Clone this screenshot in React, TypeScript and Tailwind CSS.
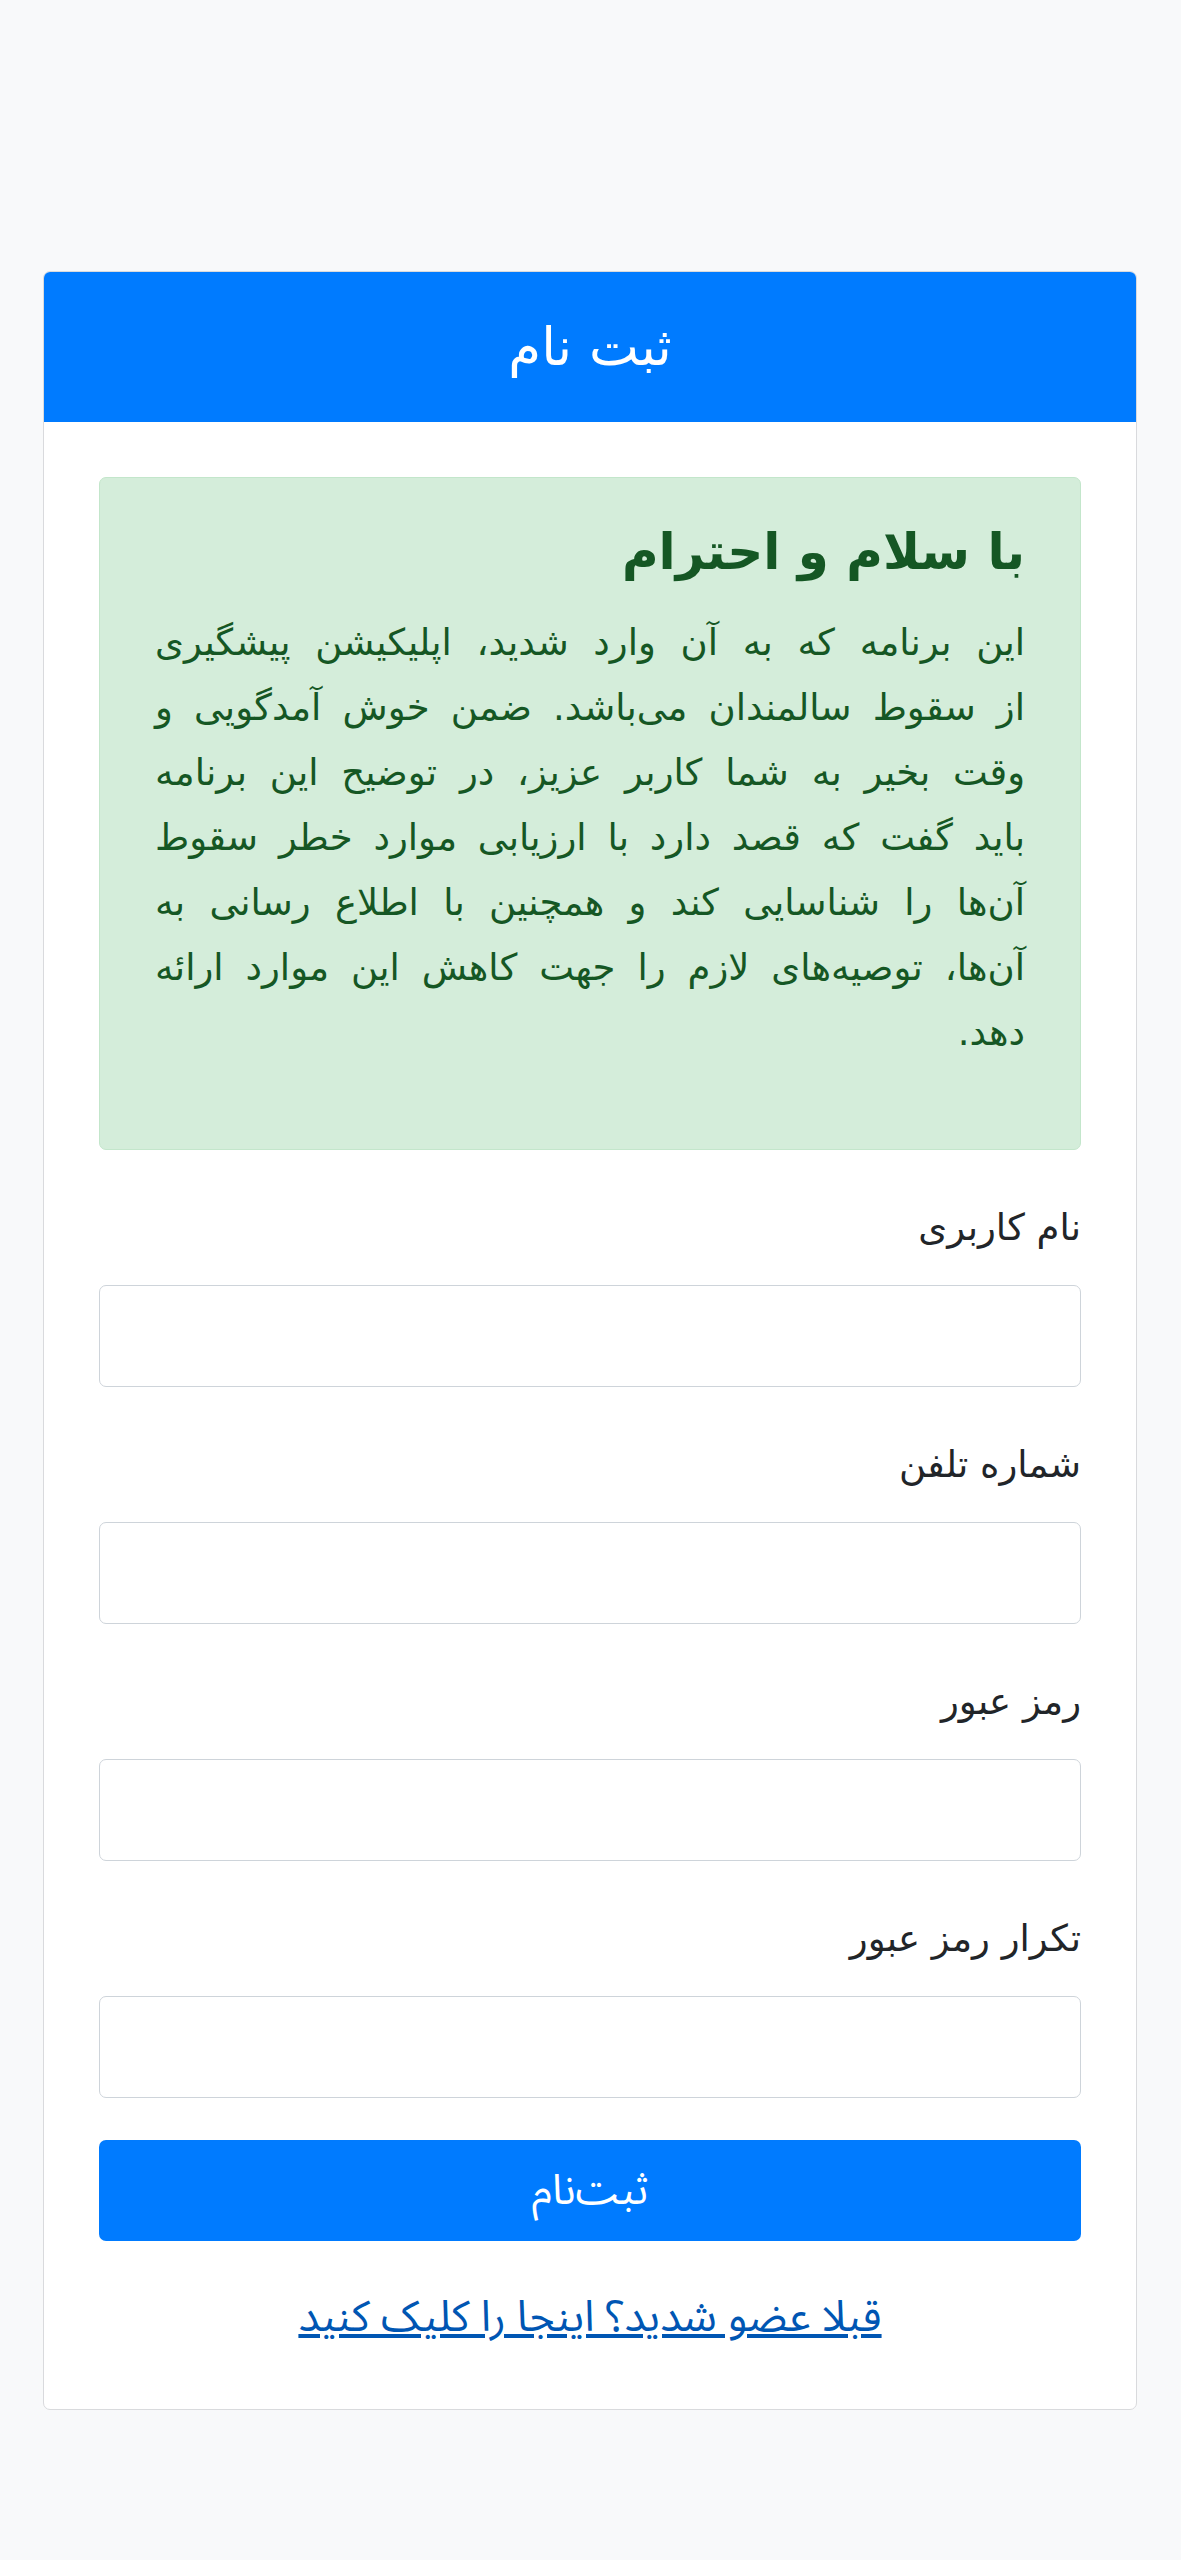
import React from "react";

// Persian text is drawn with DejaVu Sans; button and link use a second stack
const mainFont = "font-['DejaVu_Sans',sans-serif]";
const altFont = "font-['Noto_Sans_Arabic','Noto_Sans','DejaVu_Sans',sans-serif]";

const fields = [
  { id: "username", label: "نام کاربری", type: "text" },
  { id: "phone", label: "شماره تلفن", type: "tel" },
  { id: "password", label: "رمز عبور", type: "password" },
  { id: "password2", label: "تکرار رمز عبور", type: "password" },
];

// lines of the welcome note, broken where the original breaks them
const introLines = [
  "این برنامه که به آن وارد شدید، اپلیکیشن پیشگیری",
  "از سقوط سالمندان می‌باشد. ضمن خوش آمدگویی و",
  "وقت بخیر به شما کاربر عزیز، در توضیح این برنامه",
  "باید گفت که قصد دارد با ارزیابی موارد خطر سقوط",
  "آن‌ها را شناسایی کند و همچنین با اطلاع رسانی به",
  "آن‌ها، توصیه‌های لازم را جهت کاهش این موارد ارائه",
];

const App = () => {
  return (
    <div dir="rtl" className={`min-h-[2560px] bg-[#f8f9fa] px-[44px] pt-[271px] ${mainFont}`}>
      <div className="w-[1094px] rounded-[7px] border border-[#d9dadd] bg-white">
        {/* Card header */}
        <div className="flex h-[150px] items-center justify-center rounded-t-[6px] bg-[#007bff]">
          <h4 className="text-[53px] leading-[1.2] text-white">ثبت نام</h4>
        </div>

        {/* Card body */}
        <div className="px-[55px] pt-[55px] pb-[57px]">
          <div className="h-[673px] rounded-[7px] border border-[#c3e6cb] bg-[#d4edda] px-[55px] pt-[44px] text-[#155724]">
            <h4 className="mb-[28px] text-[50px] font-bold leading-[1.2]">با سلام و احترام</h4>
            <p className="text-[37px] leading-[65px]">
              {introLines.map((line, i) => (
                <span key={i} className="block text-justify [text-align-last:justify]">
                  {line}
                </span>
              ))}
              <span className="block text-right">دهد.</span>
            </p>
          </div>

          <form className="pt-[52px]" onSubmit={(e) => e.preventDefault()}>
            <div className="mb-[42px] flex flex-col gap-[52px]">
              {fields.map((field) => (
                <div key={field.id}>
                  <label htmlFor={field.id} className="mb-[31px] block text-[37px] leading-[52px] text-[#212529]">
                    {field.label}
                  </label>
                  <input
                    id={field.id}
                    type={field.type}
                    className="block h-[102px] w-full rounded-[7px] border-[1.5px] border-[#ced4da] bg-white px-[20px] text-[32px] outline-none"
                  />
                </div>
              ))}
            </div>

            <button
              type="submit"
              className={`block h-[101px] w-full rounded-[7px] bg-[#007bff] text-[42px] text-white ${altFont}`}
            >
              ثبت‌نام
            </button>

            <div className="mt-[51px] text-center leading-[52px]">
              <a href="#" className={`text-[43px] leading-[52px] text-[#0056b3] underline ${altFont}`}>
                قبلا عضو شدید؟ اینجا را کلیک کنید
              </a>
            </div>
          </form>
        </div>
      </div>
    </div>
  );
};

export default App;
